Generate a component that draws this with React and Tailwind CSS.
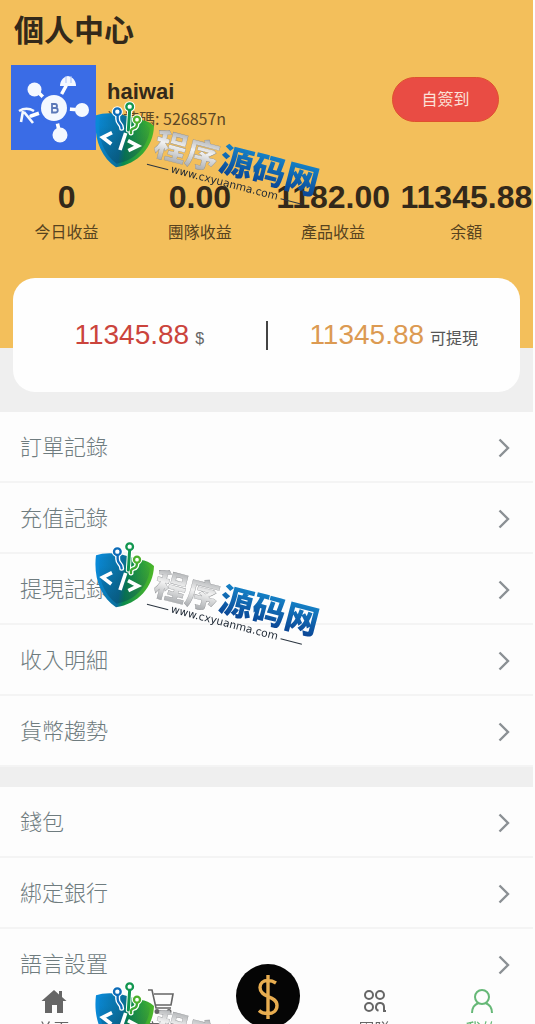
import { useId } from "react";

const stats = [
  { label: "今日收益", value: "0" },
  { label: "團隊收益", value: "0.00" },
  { label: "產品收益", value: "1182.00" },
  { label: "余額", value: "11345.88" },
];

const recordLinks = ["訂單記錄", "充值記錄", "提現記錄", "收入明細", "貨幣趨勢"];
const accountLinks = ["錢包", "綁定銀行", "語言設置"];

function Avatar() {
  return (
    <svg viewBox="0 0 85 85" className="size-[85px] shrink-0" role="img" aria-label="haiwai">
      <rect width="85" height="85" fill="#3a6ce6" />
      <g stroke="#fff" strokeWidth="3.5" strokeLinecap="round">
        <path d="M43 43 24 24M43 43 55 21M43 43 70 45M43 43 49 70M43 43 20 51" />
      </g>
      <circle cx="43" cy="43" r="16" fill="#3a6ce6" />
      <circle cx="43" cy="43" r="13" fill="#f4f8ff" />
      <circle cx="23.500" cy="24.500" r="7" fill="#f4f8ff" />
      <circle cx="71" cy="45" r="7" fill="#f4f8ff" />
      <circle cx="49" cy="70" r="7.500" fill="#f4f8ff" />
      <path d="M49 21c0-5 3-9 8-10 5 1 8 5 8 10z" fill="#f4f8ff" />
      <path d="M55 11v7M60 11v7" stroke="#a9c1f7" />
      <path d="M8 46c5-3 10-3 15 0M12 46l-2 11M13 47l9 11" stroke="#f4f8ff" strokeWidth="2.600" fill="none" />
      <path
        d="M41 39h3a2 2 0 0 1 0 4H41zm0 4h3.500a2 2 0 0 1 0 4.500H41z"
        fill="none"
        stroke="#5b78b8"
        strokeWidth="1.800"
      />
    </svg>
  );
}

function Watermark() {
  const id = useId();

  return (
    <svg viewBox="0 0 690 321" className="h-[107px] w-[230px] shrink-0" aria-hidden="true">
      <defs>
        <linearGradient id={`${id}shield`} x1="0" y1="0.350" x2="1" y2="0.500">
          <stop offset="0" stopColor="#0a8ad8" />
          <stop offset="0.450" stopColor="#0a6f9c" />
          <stop offset="0.550" stopColor="#0a8a4c" />
          <stop offset="1" stopColor="#52bb26" />
        </linearGradient>
        <linearGradient id={`${id}shade`} x1="0" y1="0" x2="0" y2="1">
          <stop offset="0.200" stopColor="#06405c" stopOpacity="0.050" />
          <stop offset="1" stopColor="#06405c" stopOpacity="0.450" />
        </linearGradient>
        <linearGradient id={`${id}silver`} x1="0" y1="0" x2="0" y2="1">
          <stop offset="0.150" stopColor="#a4a7aa" />
          <stop offset="0.500" stopColor="#f2f2f2" />
          <stop offset="0.900" stopColor="#a6a9ac" />
        </linearGradient>
        <linearGradient id={`${id}blue`} x1="0" y1="0" x2="0" y2="1">
          <stop offset="0.150" stopColor="#1688cc" />
          <stop offset="0.850" stopColor="#0b4796" />
        </linearGradient>
      </defs>

      <path
        d="M6 46Q32 36 78 42L140 60Q162 62 180 78C178 142 132 192 66 202C18 170-2 110 6 46Z"
        fill={`url(#${id}shield)`}
      />
      <path
        d="M17 54Q36 46 76 50L138 68Q156 70 168 84C164 134 128 180 68 191C28 162 10 112 17 54Z"
        fill={`url(#${id}shade)`}
      />
      <g fill="none" strokeLinecap="round">
        <g stroke="#fff" strokeWidth="15">
          <path d="M71 45v12q0 8 6 14t6 14M107 30l-4 60M129 69q0 14-10 16t-8 14" />
          <circle cx="70" cy="35" r="9" />
          <circle cx="107" cy="20" r="9" />
          <circle cx="129" cy="59" r="8" />
        </g>
        <g strokeWidth="7">
          <path d="M71 45v12q0 8 6 14t6 14" stroke="#0d6cb8" />
          <path d="M107 30l-4 60" stroke="#129650" strokeWidth="9" />
          <path d="M129 69q0 14-10 16t-8 14" stroke="#3fa934" />
          <circle cx="70" cy="35" r="10" stroke="#0d6cb8" fill="#fff" />
          <circle cx="107" cy="20" r="10" stroke="#129650" fill="#fff" />
          <circle cx="129" cy="59" r="9" stroke="#4db12b" fill="#fff" />
        </g>
      </g>
      <path
        d="M54 98 26 112 52 132M95 99 78 150M102 122 132 138 103 152"
        fill="none"
        stroke="#fff"
        strokeWidth="11"
      />

      <g
        transform="translate(176 157) rotate(14.500)"
        fontFamily="'Noto Sans CJK SC', sans-serif"
        fontWeight="900"
      >
        <text y="6" fontSize="98" fill={`url(#${id}silver)`} stroke="#8a8c8f" strokeWidth="1">
          程序
        </text>
        <text x="201" y="3" fontSize="101" fill={`url(#${id}blue)`}>
          源码网
        </text>
      </g>
      <g transform="translate(229 217) rotate(14.500)">
        <text fontSize="32" fontFamily="'DejaVu Sans', sans-serif" fill="#1d2733">
          www.cxyuanma.com
        </text>
        <path d="M-74-6H-8M340-6H406" stroke="#2b3540" strokeWidth="3" />
      </g>
    </svg>
  );
}

function MenuList({ items }) {
  return (
    <ul className="bg-[#fdfdfd]">
      {items.map((item) => (
        <li key={item} className="border-b-2 border-[#f4f4f4]">
          <a href="#" className="flex h-[69px] items-center justify-between pt-[3px] pr-[23px] pl-5">
            <span className="text-[22px] leading-8 font-light text-[#6f7c7f]">{item}</span>
            <svg viewBox="0 0 12 20" className="h-5 w-3" fill="none" stroke="#8b9094" strokeWidth="2.400">
              <path d="m1.500 1.500 8.500 8.500-8.500 8.500" />
            </svg>
          </a>
        </li>
      ))}
    </ul>
  );
}

function NavItem({ label, active, children }) {
  return (
    <a
      href="#"
      className={`flex flex-1 flex-col items-center gap-1 pt-2 ${active ? "text-[#66b877]" : "text-[#666]"}`}
    >
      <svg viewBox="0 0 26 26" className="size-[26px]" fill="none" stroke="currentColor" strokeWidth="2">
        {children}
      </svg>
      <span className="text-base leading-6">{label}</span>
    </a>
  );
}

function BottomNav() {
  return (
    <nav className="fixed inset-x-0 bottom-0 z-10 flex h-11 items-start bg-[#fdfdfd]">
      <NavItem label="首頁">
        <path d="M13 2 .500 13H4v12h7v-8h5v8h6V13h3.500L21 9V3h-3v3.500z" fill="currentColor" stroke="none" />
      </NavItem>
      <NavItem label="商城">
        <path d="M0 2h4l4 18h15M6 6h19l-2 11H8" strokeWidth="1.600" />
        <circle cx="9" cy="23.500" r="1.500" fill="currentColor" />
        <circle cx="21" cy="23.500" r="1.500" fill="currentColor" />
      </NavItem>
      <a href="#" aria-label="$" className="flex flex-1 justify-center">
        <svg viewBox="0 0 64 64" className="-mt-4 size-16 shrink-0">
          <circle cx="32" cy="32" r="32" fill="#050505" />
          <path
            d="M32 11v44M40 19c-3-2-5-2.500-8-2.500-5 0-8 3-8 7 0 5 4 7 8 9 5 2 9 4 9 9s-4 8-9 8c-4 0-7-1-9-3"
            fill="none"
            stroke="#e8ad50"
            strokeWidth="3.400"
          />
        </svg>
      </a>
      <NavItem label="團隊">
        <circle cx="7" cy="7" r="4" />
        <circle cx="18" cy="7" r="4" />
        <circle cx="7" cy="19" r="4" />
        <path d="M16.500 22.700a4 4 0 1 1 5.500-3.700v4h2" />
      </NavItem>
      <NavItem label="我的" active>
        <circle cx="13" cy="9" r="7" />
        <path d="M3 25c0-5 2.500-8.500 6.500-10M23 25c0-5-2.500-8.500-6.500-10" />
      </NavItem>
    </nav>
  );
}

export default function App() {
  return (
    <div className="relative min-h-screen bg-[#fdfdfd] pr-0.5 font-['Liberation_Sans','Noto_Sans_CJK_TC',sans-serif]">
      <main className="bg-[#efefef]">
        <header className="bg-[#f3bf5b] pb-[103px] text-[#33291a]">
          <h1 className="px-3.5 pt-2 pb-3 text-[30px] leading-[45px] font-bold">個人中心</h1>

          <div className="flex items-center pr-[34px] pl-[11px]">
            <Avatar />
            <div className="mb-2 ml-[11px] flex-1">
              <p className="text-[22px] leading-7 font-bold">haiwai</p>
              <p className="font-['Noto_Sans_CJK_TC',sans-serif] text-base leading-6 text-[#5c4726]">
                邀請碼: 526857n
              </p>
            </div>
            <button
              type="button"
              className="mb-4 h-[45px] w-[107px] rounded-full border border-[#e0502f] bg-[#e94c44] text-base text-[#fbe3da]"
            >
              自簽到
            </button>
          </div>

          <dl className="grid grid-cols-4 pt-[30px]">
            {stats.map((s) => (
              <div key={s.label} className="flex min-w-0 flex-col-reverse items-center">
                <dt className="mt-1.5 text-base leading-6 text-[#57431f]">{s.label}</dt>
                <dd className="text-[32px] leading-[35px] font-bold">{s.value}</dd>
              </div>
            ))}
          </dl>
        </header>

        <section className="relative mx-[13px] -mt-[70px] flex h-[114px] items-center rounded-[22px] bg-[#fefefe]">
          <p className="flex flex-1 items-baseline justify-center gap-1.5">
            <span className="text-[28px] leading-8 text-[#cb443c]">11345.88</span>
            <span className="text-base text-[#666]">$</span>
          </p>
          <div className="h-[29px] w-0.5 bg-[#444]" />
          <p className="flex flex-1 items-baseline justify-center gap-1.5">
            <span className="text-[28px] leading-8 text-[#dc9a52]">11345.88</span>
            <span className="text-base text-[#555]">可提現</span>
          </p>
        </section>

        <div className="flex flex-col gap-5 pt-5">
          <MenuList items={recordLinks} />
          <MenuList items={accountLinks} />
        </div>
      </main>

      <BottomNav />

      <div className="pointer-events-none absolute inset-0 z-20 flex flex-col gap-[333px] overflow-hidden pt-[100px] pl-[94px]">
        <Watermark />
        <Watermark />
        <Watermark />
      </div>
    </div>
  );
}
